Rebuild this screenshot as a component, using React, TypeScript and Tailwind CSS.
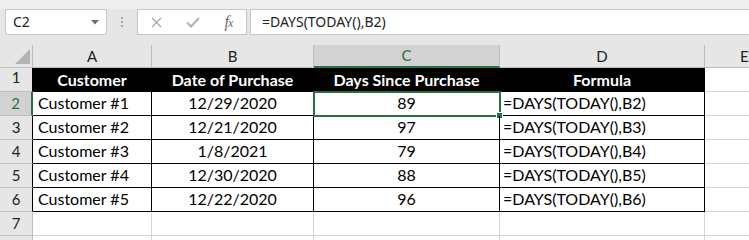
import React from "react";

type Row = { n: number; a: string; b: string; c: string; d: string };

const rows: Row[] = [
  { n: 2, a: "Customer #1", b: "12/29/2020", c: "89", d: "=DAYS(TODAY(),B2)" },
  { n: 3, a: "Customer #2", b: "12/21/2020", c: "97", d: "=DAYS(TODAY(),B3)" },
  { n: 4, a: "Customer #3", b: "1/8/2021", c: "79", d: "=DAYS(TODAY(),B4)" },
  { n: 5, a: "Customer #4", b: "12/30/2020", c: "88", d: "=DAYS(TODAY(),B5)" },
  { n: 6, a: "Customer #5", b: "12/22/2020", c: "96", d: "=DAYS(TODAY(),B6)" },
];

const cellFont = { fontFamily: "Lato, 'Noto Sans', sans-serif" };
const uiFont = { fontFamily: "'Noto Sans', 'Open Sans', sans-serif" };

export default function App() {
  return (
    <div className="w-[749px] h-[240px] overflow-hidden bg-[#e6e6e6] flex flex-col">
      {/* ribbon bottom strip */}
      <div className="h-[9px] bg-[#eeeeee] shrink-0" />
      {/* formula bar */}
      <div className="h-[26px] flex items-stretch shrink-0" style={uiFont}>
        <div className="ml-[5px] w-[102px] bg-white border border-[#c6c6c6] flex items-center justify-between pl-[7px] pr-[7px]">
          <span className="text-[14px] text-[#222] leading-none">C2</span>
          <svg width="8" height="5" viewBox="0 0 8 5">
            <path d="M0 0 L8 0 L4 4.5 Z" fill="#6d6d6d" />
          </svg>
        </div>
        <div className="w-[30px] flex flex-col items-center justify-center gap-[2px]">
          <div className="w-[2px] h-[2px] bg-[#a9a9a9]" />
          <div className="w-[2px] h-[2px] bg-[#a9a9a9]" />
          <div className="w-[2px] h-[2px] bg-[#a9a9a9]" />
        </div>
        <div className="w-[110px] bg-white border border-[#c6c6c6] flex items-center">
          <div className="w-[37px] flex justify-center">
            <svg width="11" height="11" viewBox="0 0 11 11">
              <path d="M1 1 L10 10 M10 1 L1 10" stroke="#a8a8a8" strokeWidth="1.3" />
            </svg>
          </div>
          <div className="w-[36px] flex justify-center">
            <svg width="14" height="11" viewBox="0 0 14 11">
              <path d="M1 5.5 L5 9.5 L13 1" stroke="#b5b5b5" strokeWidth="2.2" fill="none" />
            </svg>
          </div>
          <div className="w-[35px] flex justify-center">
            <span
              className="italic text-[16px] text-[#6a6a6a] leading-none tracking-[-1px]"
              style={{ fontFamily: "'Liberation Serif', serif" }}
            >
              f<span className="text-[12px]">x</span>
            </span>
          </div>
        </div>
        <div className="ml-[3px] flex-1 bg-white border-y border-l border-[#c6c6c6] flex items-center pl-[11px]">
          <span className="text-[14px] text-[#222] leading-none">=DAYS(TODAY(),B2)</span>
        </div>
      </div>
      <div className="h-[10px] shrink-0" />
      {/* grid */}
      <div
        className="grid grid-cols-[33px_119px_162px_186px_205px_1fr] grid-rows-[23px_24px_24px_24px_24px_24px_24px_24px_24px] bg-white"
        style={cellFont}
      >
        {/* column headers */}
        <div className="bg-[#e6e6e6] border-r border-b border-[#bdbdbd] relative overflow-hidden">
          <svg className="absolute left-[15px] top-[4px]" width="15" height="15" viewBox="0 0 15 15">
            <path d="M15 0 L15 15 L0 15 Z" fill="#b4b4b4" />
          </svg>
        </div>
        {["A", "B"].map((l) => (
          <div
            key={l}
            className="bg-[#e6e6e6] border-r border-b border-[#bdbdbd] flex items-center justify-center text-[15px] text-[#222]"
          >
            {l}
          </div>
        ))}
        <div className="bg-[#d2d2d2] border-r border-[#bdbdbd] border-b-2 border-b-[#217346] flex items-center justify-center text-[15px] text-[#217346]">
          C
        </div>
        <div className="bg-[#e6e6e6] border-r border-b border-[#bdbdbd] flex items-center justify-center text-[15px] text-[#222]">
          D
        </div>
        <div className="bg-[#e6e6e6] border-b border-[#bdbdbd] flex items-center pl-[35px] text-[15px] text-[#222]">
          E
        </div>

        {/* row 1 */}
        <div className="bg-[#e6e6e6] border-r border-r-black border-b border-b-[#bdbdbd] flex items-end justify-center pb-[3px] text-[15px] text-[#222]">
          1
        </div>
        {["Customer", "Date of Purchase", "Days Since Purchase", "Formula"].map((h) => (
          <div
            key={h}
            className="bg-black text-white font-bold border-r border-b border-black flex items-end justify-center pb-[3px] text-[16px] leading-none"
          >
            {h}
          </div>
        ))}
        <div className="border-b border-[#d4d4d4]" />

        {/* data rows */}
        {rows.map((r) => {
          const sel = r.n === 2;
          return (
            <React.Fragment key={r.n}>
              <div
                className={
                  sel
                    ? "bg-[#d2d2d2] border-r-2 border-r-[#217346] border-b border-b-[#bdbdbd] flex items-end justify-center pb-[4px] text-[15px] text-[#217346] leading-none"
                    : "bg-[#e6e6e6] border-r border-r-black border-b border-b-[#bdbdbd] flex items-end justify-center pb-[4px] text-[15px] text-[#222] leading-none"
                }
              >
                {r.n}
              </div>
              <div className="border-r border-b border-black flex items-end pl-[5px] pb-[4px] text-[16px] leading-none text-black">
                {r.a}
              </div>
              <div className="border-r border-b border-black flex items-end justify-center pb-[4px] text-[16px] leading-none text-black">
                {r.b}
              </div>
              <div className="border-r border-b border-black flex items-end justify-center pb-[4px] text-[16px] leading-none text-black relative">
                {r.c}
                {sel && (
                  <div className="absolute left-[-1px] top-[-1px] w-[188px] h-[26px] border-2 border-[#217346]">
                    <div className="absolute right-[-4px] bottom-[-4px] w-[7px] h-[7px] bg-[#217346] border border-white" />
                  </div>
                )}
              </div>
              <div className="border-r border-b border-black flex items-end pl-[3px] pb-[4px] text-[16px] leading-none text-black">
                {r.d}
              </div>
              <div className="border-b border-[#d4d4d4]" />
            </React.Fragment>
          );
        })}

        {/* row 7, 8 */}
        {[7, 8].map((n) => (
          <React.Fragment key={n}>
            <div className="bg-[#e6e6e6] border-r border-b border-[#bdbdbd] flex items-end justify-center pb-[4px] text-[15px] text-[#222] leading-none">
              {n === 7 ? "7" : ""}
            </div>
            <div className="border-r border-b border-[#d4d4d4]" />
            <div className="border-r border-b border-[#d4d4d4]" />
            <div className="border-r border-b border-[#d4d4d4]" />
            <div className="border-r border-b border-[#d4d4d4]" />
            <div className="border-b border-[#d4d4d4]" />
          </React.Fragment>
        ))}
      </div>
    </div>
  );
}
